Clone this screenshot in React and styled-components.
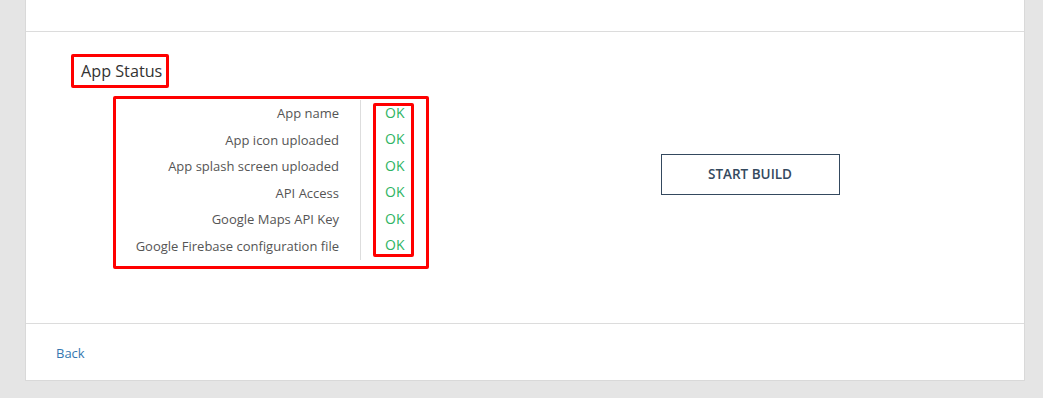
import React from "react";
import styled, { createGlobalStyle } from "styled-components";

const GlobalStyle = createGlobalStyle`
  html, body {
    margin: 0;
    padding: 0;
    background: #e5e5e5;
    font-family: "Open Sans", "Liberation Sans", sans-serif;
  }
`;

const Card = styled.div`
  margin: 0 18px 0 25px;
  background: #fff;
  border: 1px solid #d9d9d9;
  border-top: none;
`;

const TopSection = styled.div`
  height: 31px;
  border-bottom: 1px solid #dcdcdc;
`;

const Main = styled.div`
  height: 291px;
  display: grid;
  grid-template-columns: 450px 1fr;
  border-bottom: 1px solid #dcdcdc;
`;

const LeftColumn = styled.div`
  display: flex;
  flex-direction: column;
  align-items: flex-start;
  padding-top: 22px;
`;

const Heading = styled.h3`
  margin: 0 0 8px 45px;
  padding: 4px 4px 4px 7px;
  border: 3px solid #ff0000;
  border-radius: 2px;
  width: 98px;
  box-sizing: border-box;
  font-size: 16.2px;
  font-weight: 400;
  line-height: 20px;
  color: #333;
  white-space: nowrap;
`;

const StatusTable = styled.div`
  margin-left: 87px;
  display: flex;
  border: 3px solid #ff0000;
  border-radius: 2px;
  padding: 1px 12px 6px 0;
`;

const LabelColumn = styled.div`
  width: 245px;
  box-sizing: border-box;
  padding-right: 21px;
  border-right: 1px solid #dddddd;
  text-align: right;
`;

const ValueColumn = styled.div`
  margin: 3px 0 3px 12px;
  border: 3px solid #ff0000;
  border-radius: 2px;
  padding: 0 7px 0 9px;
`;

const ValueList = styled.div`
  margin: -6.2px 0 -5.2px;
`;

const Row = styled.div`
  height: 26.5px;
  line-height: 26.5px;
  font-size: ${(p) => (p.$ok ? "14px" : "13px")};
  white-space: nowrap;
  color: ${(p) => (p.$ok ? "#2fb463" : "#555")};
`;

const RightColumn = styled.div`
  display: flex;
  align-items: center;
  justify-content: center;
  padding-bottom: 7px;
`;

const BuildButton = styled.button`
  width: 179px;
  height: 41px;
  background: #fff;
  border: 1px solid #34495e;
  color: #34495e;
  font-family: "Open Sans", "Liberation Sans", sans-serif;
  font-size: 13.5px;
  font-weight: 600;
  cursor: pointer;
`;

const Footer = styled.div`
  height: 56px;
  display: flex;
  align-items: center;
  padding-left: 30px;
`;

const BackLink = styled.a`
  font-size: 13px;
  color: #3577b0;
  text-decoration: none;
  margin-top: 1px;
`;

const checks = [
  "App name",
  "App icon uploaded",
  "App splash screen uploaded",
  "API Access",
  "Google Maps API Key",
  "Google Firebase configuration file",
];

export default function App() {
  return (
    <>
      <GlobalStyle />
      <Card>
        <TopSection />
        <Main>
          <LeftColumn>
            <Heading>App Status</Heading>
            <StatusTable>
              <LabelColumn>
                {checks.map((c) => (
                  <Row key={c}>{c}</Row>
                ))}
              </LabelColumn>
              <ValueColumn>
                <ValueList>
                  {checks.map((c) => (
                    <Row key={c} $ok>
                      OK
                    </Row>
                  ))}
                </ValueList>
              </ValueColumn>
            </StatusTable>
          </LeftColumn>
          <RightColumn>
            <BuildButton>START BUILD</BuildButton>
          </RightColumn>
        </Main>
        <Footer>
          <BackLink href="#">Back</BackLink>
        </Footer>
      </Card>
    </>
  );
}
